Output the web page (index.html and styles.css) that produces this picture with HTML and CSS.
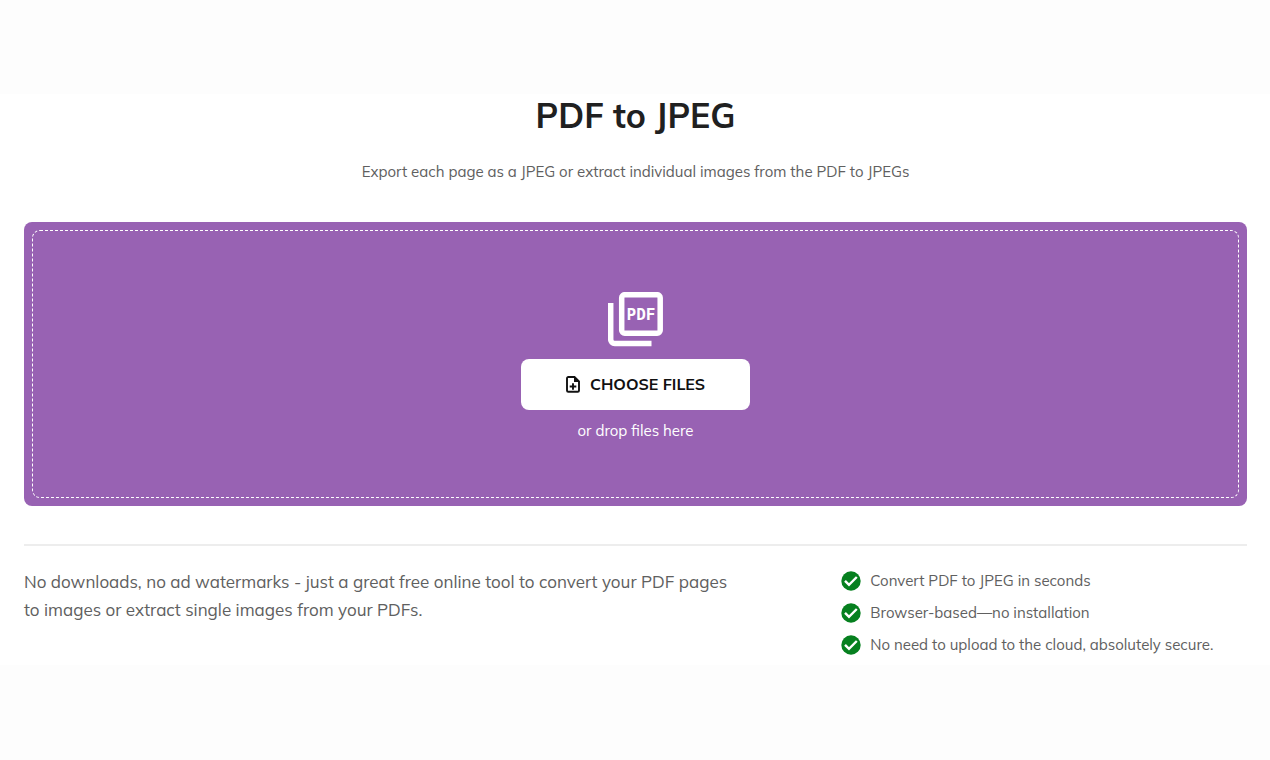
FILE: index.html
```html
<!DOCTYPE html>
<html lang="en">
<head>
  <meta charset="UTF-8" />
  <meta name="viewport" content="width=device-width, initial-scale=1.0" />
  <title>PDF to JPEG</title>
  <link rel="stylesheet" href="styles.css">
</head>
<body>
  <main class="tool">
    <h1>PDF to JPEG</h1>
    <p class="subtitle">Export each page as a JPEG or extract individual images from the PDF to JPEGs</p>

    <div class="drop-zone">
      <div class="drop-inner">
        <svg class="pdf-icon" viewBox="0 0 55 55" aria-hidden="true">
          <path d="M2.700 11v36.500a4 4 0 0 0 4 4H43.500" fill="none" stroke="#fff" stroke-width="5.500" />
          <rect x="13.700" y="2.700" width="38.500" height="38.500" rx="3" fill="none" stroke="#fff" stroke-width="5.500" />
          <text class="pdf-label" x="33" y="28" text-anchor="middle">PDF</text>
        </svg>
        <button class="choose-btn" id="chooseBtn" type="button">
          <svg class="file-icon" viewBox="0 0 14 17" aria-hidden="true">
            <path d="M2.300 1H8.500L13 5.500V14.500a1.300 1.300 0 0 1-1.300 1.300H2.300A1.300 1.300 0 0 1 1 14.500V2.300A1.300 1.300 0 0 1 2.300 1z" fill="none" stroke="#111" stroke-width="1.900" />
            <path d="M8 1v5h5z" fill="#111" />
            <path d="M7 7.200v6.600M3.700 10.500h6.600" stroke="#111" stroke-width="1.900" />
          </svg>
          <span>CHOOSE FILES</span>
        </button>
        <p class="drop-text">or drop files here</p>
      </div>
    </div>

    <section class="details">
      <p class="about">No downloads, no ad watermarks - just a great free online tool to convert your PDF pages to images or extract single images from your PDFs.</p>
      <ul class="features">
        <li>
          <svg class="check" viewBox="0 0 20 20" aria-hidden="true"><circle cx="10" cy="10" r="9.700" /><path d="M4 9.800l4 4 7.800-7.800" /></svg>
          <span>Convert PDF to JPEG in seconds</span>
        </li>
        <li>
          <svg class="check" viewBox="0 0 20 20" aria-hidden="true"><circle cx="10" cy="10" r="9.700" /><path d="M4 9.800l4 4 7.800-7.800" /></svg>
          <span>Browser-based—no installation</span>
        </li>
        <li>
          <svg class="check" viewBox="0 0 20 20" aria-hidden="true"><circle cx="10" cy="10" r="9.700" /><path d="M4 9.800l4 4 7.800-7.800" /></svg>
          <span>No need to upload to the cloud, absolutely secure.</span>
        </li>
      </ul>
    </section>
  </main>
</body>
</html>
```

FILE: styles.css
```css
* {
  box-sizing: border-box;
}
body {
  margin: 0;
  padding: 94px 0;
  background: #fdfdfd;
  font-family: Mulish, Muli, Lato, sans-serif;
  font-size: 15px;
  color: #606060;
}
.tool {
  padding: 0 23px 4px 24px;
  background: #fff;
}
h1 {
  margin: 0;
  font-size: 34px;
  line-height: 44px;
  font-weight: bold;
  text-align: center;
  color: #202020;
}
.subtitle {
  margin: 22px 0 38px;
  line-height: 24px;
  text-align: center;
}
.drop-zone {
  padding: 8px;
  border-radius: 8px;
  background: #9862b3;
}
.drop-inner {
  display: flex;
  flex-direction: column;
  align-items: center;
  padding: 61px 16px 54px;
  border: 1px dashed #fff;
  border-radius: 8px;
}
.pdf-icon {
  width: 55px;
  height: 55px;
  margin-bottom: 12px;
}
.pdf-label {
  font-family: "DejaVu Sans Mono", monospace;
  font-size: 16px;
  font-weight: bold;
  fill: #fff;
}
.choose-btn {
  display: flex;
  justify-content: center;
  align-items: center;
  gap: 10px;
  min-width: 229px;
  padding: 14px 32px;
  border: none;
  border-radius: 8px;
  background: #fff;
  color: #111;
  font-family: inherit;
  font-size: 16px;
  line-height: 23px;
  font-weight: bold;
  cursor: pointer;
}
.file-icon {
  width: 14px;
  height: 17px;
}
.drop-text {
  margin: 9px 0 0;
  line-height: 24px;
  color: #fff;
}
.details {
  display: grid;
  grid-template-columns: 2fr 1fr;
  margin-top: 38px;
  padding-top: 19px;
  border-top: 2px solid #ededed;
}
.about {
  margin: 3px 0 0;
  max-width: 720px;
  font-size: 17px;
  line-height: 28px;
}
.features {
  margin: 0;
  padding: 0 0 0 2px;
  list-style: none;
}
.features li {
  display: flex;
  align-items: center;
  gap: 9px;
  line-height: 32px;
}
.check {
  flex: none;
  width: 20px;
  height: 20px;
}
.check circle {
  fill: #06801f;
}
.check path {
  fill: none;
  stroke: #fff;
  stroke-width: 2.400;
}
```
